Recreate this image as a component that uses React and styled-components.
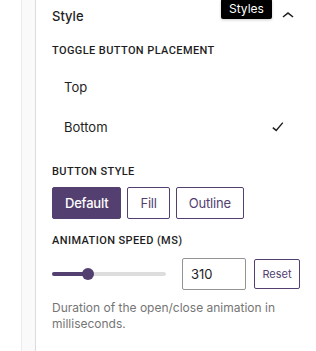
import React from "react";
import styled, { createGlobalStyle } from "styled-components";

const GlobalStyle = createGlobalStyle`
  html, body { margin: 0; padding: 0; background: #fff; }
  body {
    font-family: Inter, "Noto Sans", "Liberation Sans", sans-serif;
    color: #1e1e1e;
    -webkit-font-smoothing: antialiased;
  }
  * { box-sizing: border-box; }
`;

const PURPLE = "#533f70";

const Layout = styled.div`
  display: flex;
  width: 316px;
  height: 351px;
  overflow: hidden;
`;

const Gutter = styled.div`
  margin-left: 21px;
  width: 15px;
  flex: none;
  background: #fafafa;
  border-left: 1px solid #ececec;
  border-right: 1px solid #dcdcdc;
`;

const Panel = styled.div`
  flex: 1;
  min-width: 0;
`;

const Header = styled.div`
  position: relative;
  height: 32px;
  display: flex;
  align-items: center;
  justify-content: space-between;
  padding: 0 16px 0 16px;
`;

const Title = styled.span`
  font-size: 13px;
  font-weight: 500;
  line-height: 16px;
`;

const Tooltip = styled.div`
  position: absolute;
  left: 185px;
  top: -1px;
  height: 20px;
  padding: 0 8px;
  background: #000;
  color: #fff;
  font-size: 12px;
  line-height: 20px;
  border-radius: 2px;
  box-shadow: 0 1px 3px rgba(0, 0, 0, 0.2);
`;

const Body = styled.div`
  padding: 11px 16px 0 16px;
`;

const Label = styled.div`
  font-family: Roboto, "Liberation Sans", sans-serif;
  font-size: 11px;
  font-weight: 500;
  letter-spacing: 0.4px;
  line-height: 16px;
  text-transform: uppercase;
  color: #1e1e1e;
`;

const OptionList = styled.div`
  margin: 8px 0 17px;
`;

const Option = styled.div`
  height: 40px;
  display: flex;
  align-items: center;
  justify-content: space-between;
  padding: 0 10px 0 12px;
  font-size: 13px;
`;

const Section = styled.div`
  margin-top: ${(p) => p.$mt || 0}px;
`;

const ButtonGroup = styled.div`
  display: flex;
  gap: 6px;
  margin-top: 7px;
`;

const StyleButton = styled.button`
  height: 32px;
  padding: 0 12px;
  font-family: Inter, sans-serif;
  font-size: 13px;
  letter-spacing: -0.2px;
  font-weight: ${(p) => (p.$active ? 500 : 400)};
  border-radius: 2px;
  border: 1px solid ${PURPLE};
  background: ${(p) => (p.$active ? PURPLE : "#fff")};
  color: ${(p) => (p.$active ? "#fff" : PURPLE)};
  cursor: pointer;
`;

const SliderRow = styled.div`
  display: flex;
  align-items: center;
  margin-top: 9px;
`;

const Track = styled.div`
  position: relative;
  flex: 1;
  height: 4px;
  border-radius: 2px;
  background: #ddd;
  margin-right: 16px;
`;

const Fill = styled.div`
  position: absolute;
  left: 0;
  top: 0;
  height: 4px;
  border-radius: 2px;
  background: ${PURPLE};
`;

const Thumb = styled.div`
  position: absolute;
  top: 50%;
  width: 12px;
  height: 12px;
  border-radius: 50%;
  background: ${PURPLE};
  transform: translate(-50%, -50%);
`;

const NumberInput = styled.div`
  width: 64px;
  height: 32px;
  border: 1px solid #949494;
  border-radius: 2px;
  padding: 0 8px;
  display: flex;
  align-items: center;
  font-size: 13px;
`;

const ResetButton = styled.button`
  margin-left: 8px;
  width: 46px;
  height: 30px;
  padding: 0;
  font-family: inherit;
  font-size: 11px;
  border: 1px solid ${PURPLE};
  border-radius: 2px;
  background: #fff;
  color: ${PURPLE};
`;

const Help = styled.p`
  margin: 10px 0 0;
  font-size: 12px;
  line-height: 16px;
  color: #757575;
`;

const Icon = styled.svg`
  width: 24px;
  height: 24px;
  fill: #1e1e1e;
  flex: none;
`;

const CheckIcon = styled.svg`
  width: 24px;
  height: 24px;
  flex: none;
  fill: none;
  stroke: #1e1e1e;
  stroke-width: 1.4;
`;

export default function App() {
  const value = 310;
  const pct = 31.5;
  return (
    <>
      <GlobalStyle />
      <Layout>
        <Gutter />
        <Panel>
          <Header>
            <Title>Style</Title>
            <Tooltip>Styles</Tooltip>
            <Icon viewBox="0 0 24 24">
              <path d="M6.5 12.4L12 8l5.5 4.4-.9 1.2L12 10l-4.6 3.6-.9-1.2z" />
            </Icon>
          </Header>
          <Body>
            <Label>Toggle Button Placement</Label>
            <OptionList>
              <Option>Top</Option>
              <Option>
                Bottom
                <CheckIcon viewBox="0 0 24 24">
                  <polyline points="6.8,12.6 10.2,15.4 16.8,7.6" />
                </CheckIcon>
              </Option>
            </OptionList>
            <Section>
              <Label>Button Style</Label>
              <ButtonGroup>
                <StyleButton $active>Default</StyleButton>
                <StyleButton>Fill</StyleButton>
                <StyleButton>Outline</StyleButton>
              </ButtonGroup>
            </Section>
            <Section $mt={14}>
              <Label>Animation Speed (ms)</Label>
              <SliderRow>
                <Track>
                  <Fill style={{ width: `${pct}%` }} />
                  <Thumb style={{ left: `${pct}%` }} />
                </Track>
                <NumberInput>{value}</NumberInput>
                <ResetButton>Reset</ResetButton>
              </SliderRow>
              <Help>Duration of the open/close animation in milliseconds.</Help>
            </Section>
          </Body>
        </Panel>
      </Layout>
    </>
  );
}
